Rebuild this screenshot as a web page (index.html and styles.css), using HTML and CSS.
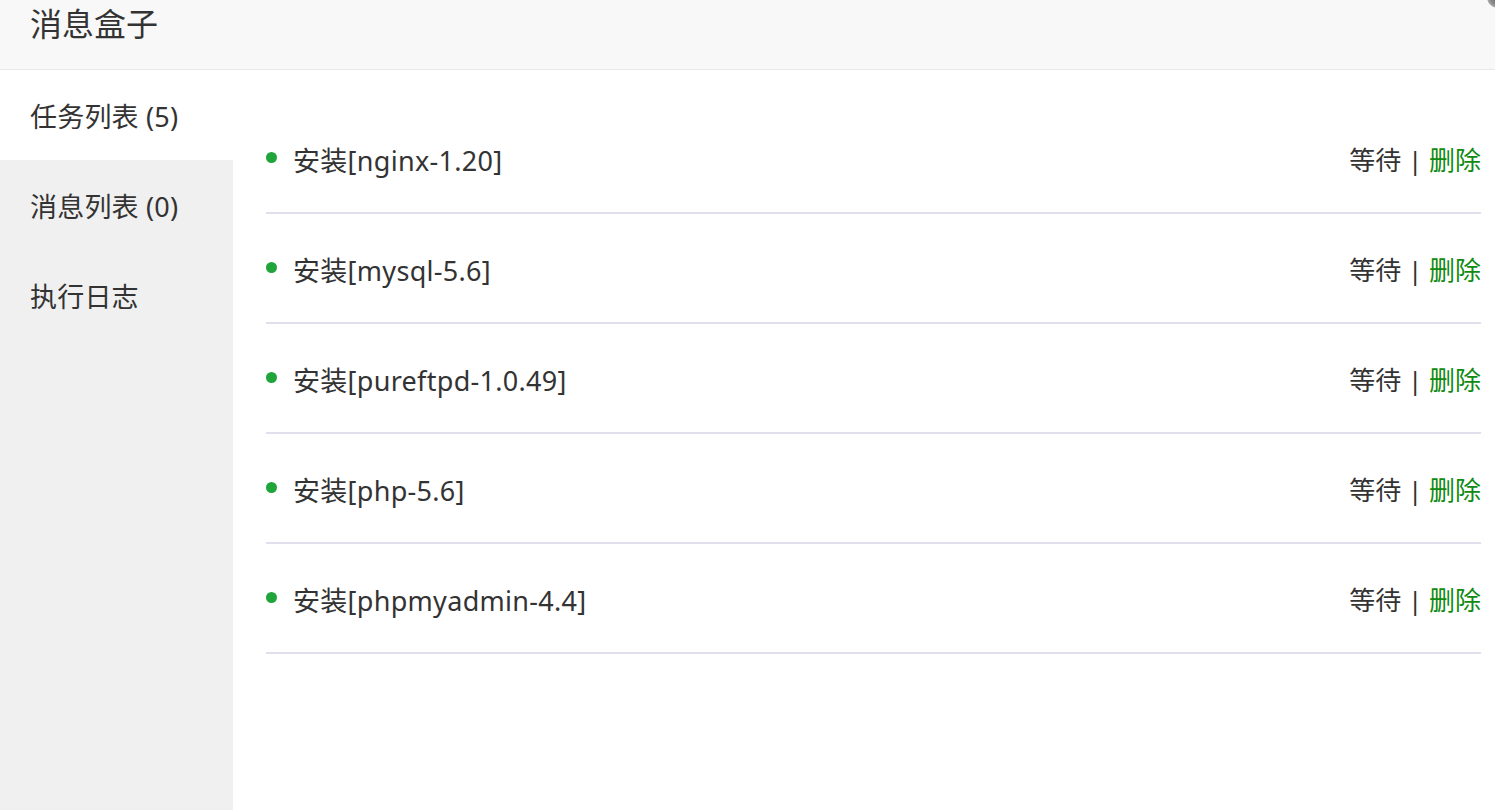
FILE: index.html
```html
<!DOCTYPE html>
<html lang="zh-CN">
<head>
<meta charset="utf-8">
<title>消息盒子</title>
<link rel="stylesheet" href="styles.css">
</head>
<body>
<div class="dialog">
  <div class="header">
    <span class="title">消息盒子</span>
    <span class="close"></span>
  </div>
  <div class="main">
    <ul class="sidebar">
      <li class="tab active">任务列表 (5)</li>
      <li class="tab">消息列表 (0)</li>
      <li class="tab">执行日志</li>
    </ul>
    <div class="content">
      <ul class="tasks">
        <li class="task"><span class="dot"></span><span class="name">安装[nginx-1.20]</span><span class="ops">等待 | <a class="del">删除</a></span></li>
        <li class="task"><span class="dot"></span><span class="name">安装[mysql-5.6]</span><span class="ops">等待 | <a class="del">删除</a></span></li>
        <li class="task"><span class="dot"></span><span class="name">安装[pureftpd-1.0.49]</span><span class="ops">等待 | <a class="del">删除</a></span></li>
        <li class="task"><span class="dot"></span><span class="name">安装[php-5.6]</span><span class="ops">等待 | <a class="del">删除</a></span></li>
        <li class="task"><span class="dot"></span><span class="name">安装[phpmyadmin-4.4]</span><span class="ops">等待 | <a class="del">删除</a></span></li>
      </ul>
    </div>
  </div>
</div>
</body>
</html>
```

FILE: styles.css
```css
* { box-sizing: border-box; }
html, body {
  margin: 0;
  padding: 0;
  width: 1495px;
  height: 810px;
  overflow: hidden;
  background: #fff;
  font-family: "Noto Sans", "Noto Sans CJK SC", sans-serif;
  color: #333;
}
ul { list-style: none; margin: 0; padding: 0; }

.dialog {
  display: flex;
  flex-direction: column;
  height: 810px;
}

.header {
  position: relative;
  height: 70px;
  flex: none;
  background: #f8f8f8;
  border-bottom: 1px solid #e8e8e8;
  padding-left: 30px;
  overflow: hidden;
}
.title {
  display: block;
  font-size: 32px;
  line-height: 48px;
  color: #333;
}
.close {
  position: absolute;
  right: -14px;
  top: -14px;
  width: 22px;
  height: 22px;
  border-radius: 50%;
  background: radial-gradient(circle, #666 0, #888 50%, #ddd 100%);
}

.main {
  flex: 1;
  display: flex;
  min-height: 0;
}

.sidebar {
  width: 233px;
  flex: none;
  background: #f0f0f0;
}
.tab {
  height: 90px;
  padding-top: 4px;
  line-height: 86px;
  padding-left: 30px;
  font-size: 27px;
  letter-spacing: 0.2px;
  color: #333;
}
.tab.active {
  background: #fff;
}

.content {
  flex: 1;
  padding: 34px 14px 0 33px;
}
.task {
  display: flex;
  align-items: center;
  height: 110px;
  padding-top: 2px;
  border-bottom: 2px solid #e0dfeb;
  font-size: 27px;
}
.dot {
  width: 11px;
  height: 11px;
  border-radius: 50%;
  background: #20a53a;
  margin-right: 16px;
  margin-top: -3px;
}
.name {
  flex: 1;
  color: #333;
  letter-spacing: 0.3px;
}
.ops {
  color: #333;
  font-size: 26px;
}
.del {
  color: #108b10;
  text-decoration: none;
}
```
